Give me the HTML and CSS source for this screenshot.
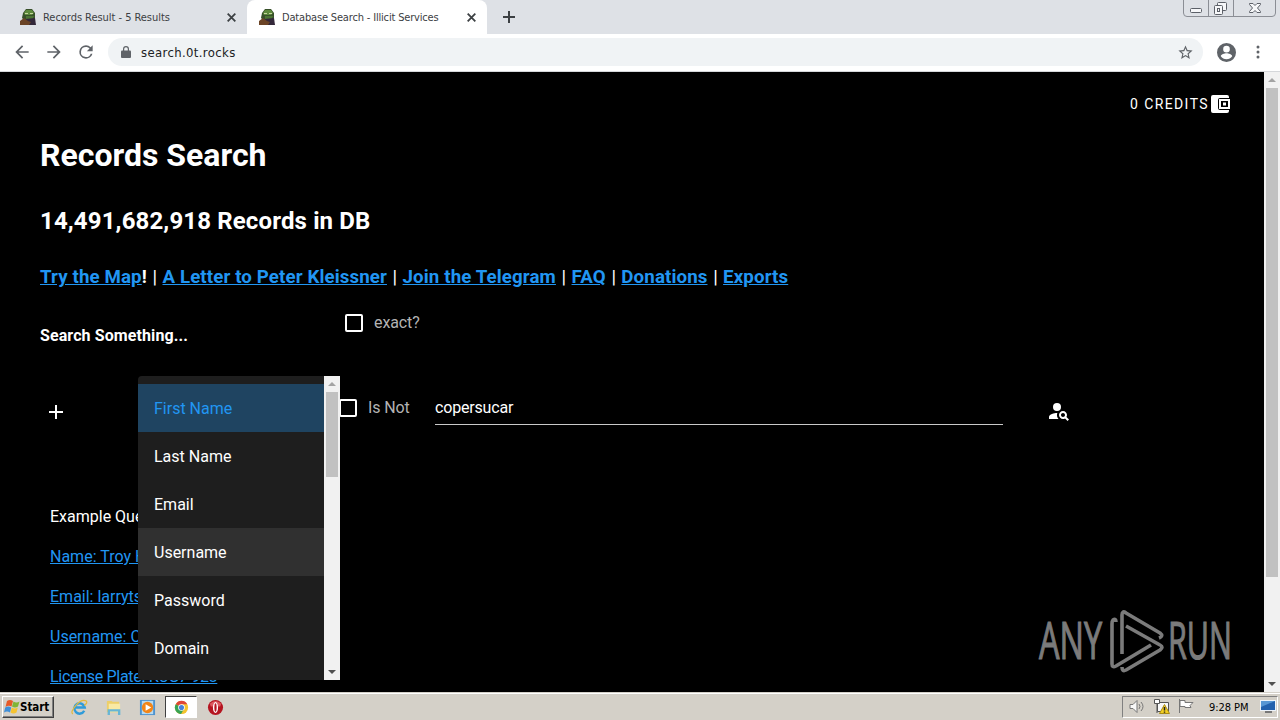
FILE: index.html
```
<!DOCTYPE html>
<html lang="en">
<head>
<meta charset="utf-8">
<title>Database Search - Illicit Services</title>
<link rel="stylesheet" href="styles.css">
</head>
<body>
<svg width="0" height="0" class="defs">
  <symbol id="frog" viewBox="0 0 16 16">
    <path fill="#38502a" d="M6 0h6l3 4v5l-2 3H5L2 9l1-5z"/>
    <path fill="#5d8a3c" d="M6 1h6l2 3-2 2H5L4 4z"/>
    <path fill="#4c7534" d="M6 7h8l-2 4H6z"/>
    <path fill="#c7d6a0" d="M5 4h3v1H5zM10 4h3v1h-3z"/>
    <path fill="#33283a" d="M5 10l10-1 1 7H4z"/>
    <path fill="#6b4426" d="M0 12l4-3 4 3 3 1-2 3H0z"/>
  </symbol>
  <symbol id="close" viewBox="0 0 8 8"><path d="M.6.6l6.8 6.8M7.4.6L.6 7.4" stroke="#3c4043" stroke-width="1.600"/></symbol>
</svg>
<div class="tabs">
  <div class="tab"><svg class="fav"><use href="#frog"/></svg><span class="t1">Records Result - 5 Results</span><svg class="x"><use href="#close"/></svg></div>
  <div class="tab active"><svg class="fav"><use href="#frog"/></svg><span class="t2">Database Search - Illicit Services</span><svg class="x"><use href="#close"/></svg></div>
  <svg class="newtab" viewBox="0 0 12 12"><path d="M6 0v12M0 6h12" stroke="#3c4043" stroke-width="2"/></svg>
  <svg class="winbtns" width="94" height="18" viewBox="0 0 94 18" fill="none">
    <path d="M.5 0v13q0 3.500 3.500 3.500h85q3.500 0 3.500-3.500V0M25.500 0v16M50.500 0v16" stroke="#8b8e95"/>
    <rect x="7.500" y="8.500" width="11" height="4" rx="1" fill="#f6f7f9" stroke="#5c6068"/>
    <rect x="34.500" y="2.500" width="9" height="8" rx="1" fill="#f6f7f9" stroke="#5c6068"/>
    <rect x="31.500" y="5.500" width="8" height="9" rx="1" fill="#f6f7f9" stroke="#5c6068"/>
    <rect x="34.500" y="8.500" width="2" height="3" stroke="#5c6068"/>
    <path d="M66.500 3.500h3.500l2 2 2-2h3.500v1l-3 3.500 3 3.500v1H74l-2-2-2 2h-3.500v-1l3-3.500-3-3.500z" fill="#f6f7f9" stroke="#5c6068"/>
  </svg>
</div>
<div class="toolbar">
  <svg class="nav" viewBox="0 0 24 24"><path d="M20 11H7.830l5.590-5.590L12 4l-8 8 8 8 1.410-1.410L7.830 13H20v-2z"/></svg>
  <svg class="nav" viewBox="0 0 24 24"><path d="M12 4l-1.410 1.410L16.170 11H4v2h12.170l-5.580 5.590L12 20l8-8z"/></svg>
  <svg class="nav" viewBox="0 0 24 24"><path d="M17.650 6.350A7.960 7.960 0 0 0 12 4a8 8 0 1 0 7.730 10h-2.080A6 6 0 1 1 12 6c1.660 0 3.140.69 4.220 1.780L13 11h7V4z"/></svg>
  <div class="omni">
    <svg class="lock" viewBox="0 0 10 12"><path d="M1 4.500h8q1 0 1 1V11q0 1-1 1H1q-1 0-1-1V5.500q0-1 1-1z" fill="#5f6368"/><path d="M2.600 5V3a2.400 2.400 0 0 1 4.800 0v2" fill="none" stroke="#5f6368" stroke-width="1.200"/></svg>
    <span class="url">search.0t.rocks</span>
    <svg class="star" viewBox="0 0 24 24"><path d="M22 9.240l-7.190-.62L12 2 9.190 8.630 2 9.240l5.460 4.730L5.820 21 12 17.270 18.180 21l-1.630-7.030zM12 15.400l-3.760 2.270 1-4.280-3.320-2.880 4.380-.38L12 6.100l1.710 4.040 4.380.38-3.320 2.880 1 4.280z"/></svg>
  </div>
  <svg class="user" viewBox="2 2 20 20"><path d="M12 2a10 10 0 1 0 0 20 10 10 0 0 0 0-20zm0 3a3.500 3.500 0 1 1 0 7 3.500 3.500 0 0 1 0-7zm0 14.200a7.200 7.200 0 0 1-6-3.220c.03-1.990 4-3.080 6-3.080s5.970 1.090 6 3.080a7.200 7.200 0 0 1-6 3.220z"/></svg>
  <svg class="dots" viewBox="0 0 4 14"><circle cx="2" cy="2" r="1.500"/><circle cx="2" cy="7" r="1.500"/><circle cx="2" cy="12" r="1.500"/></svg>
</div>
<div class="view">
  <main>
    <div class="credits"><span>0 CREDITS</span><svg class="wallet" viewBox="0 0 19 18"><path fill="#fff" d="M2 0h14q2 0 2 2v1H9Q7 3 7 5v8q0 2 2 2h9v1q0 2-2 2H2q-2 0-2-2V2q0-2 2-2z"/><path fill="none" stroke="#fff" stroke-width="2" d="M9 5h9v8H9z"/><path fill="#fff" d="M12 7.500h3v3h-3z"/></svg></div>
    <h1><span>Records Search</span></h1>
    <h2><span>14,491,682,918 Records in DB</span></h2>
    <h3><a>Try the Map</a>! <i>|</i> <a>A Letter to Peter Kleissner</a> <i>|</i> <a>Join the Telegram</a> <i>|</i> <a>FAQ</a> <i>|</i> <a>Donations</a> <i>|</i> <a>Exports</a></h3>
    <div class="top"><b>Search Something...</b><div class="check"><span class="box"></span><span class="lbl">exact?</span></div></div>
    <div class="query">
      <svg class="plus" viewBox="0 0 14 14"><path d="M7 0v14M0 7h14" stroke="#fff" stroke-width="2"/></svg>
      <div class="select"></div>
      <div class="check isnot"><span class="box"></span><span class="lbl">Is Not</span></div>
      <div class="input"><span>copersucar</span></div>
      <svg class="find" viewBox="0 0 24 24" fill="#fff"><circle cx="10" cy="8" r="4"/><path d="M10.350 14.010C7.620 13.910 2 15.270 2 18v2h9.540c-2.470-2.760-1.230-5.890-1.190-5.990zM19.430 18.020c.36-.59.57-1.280.57-2.020 0-2.210-1.790-4-4-4s-4 1.790-4 4 1.790 4 4 4c.74 0 1.430-.22 2.020-.57L20.590 22 22 20.590zM16 18c-1.100 0-2-.9-2-2s.9-2 2-2 2 .9 2 2-.9 2-2 2z"/></svg>
    </div>
    <div class="examples">
      <span>Example Queries</span>
      <a>Name: Troy Hunt</a>
      <a>Email: larrytsai</a>
      <a>Username: Crypto</a>
      <a class="plate">License Plate: KCG7 928</a>
    </div>
    <div class="menu">
      <ul><li class="sel">First Name</li><li>Last Name</li><li>Email</li><li class="hover">Username</li><li>Password</li><li>Domain</li></ul>
      <div class="sb"><i class="up"></i><div class="thumb"></div><i class="down"></i></div>
    </div>
    <svg class="mark" width="200" height="72" viewBox="0 0 200 72">
      <g fill="#7b7b7b" stroke="#7b7b7b" stroke-width="1.200" font-family="'Open Sans',sans-serif" font-size="51">
        <text x="3" y="56" textLength="63" lengthAdjust="spacingAndGlyphs">ANY</text>
        <text x="132" y="56" textLength="64" lengthAdjust="spacingAndGlyphs">RUN</text>
      </g>
      <g fill="none" stroke="#7b7b7b" stroke-width="3.600" stroke-linejoin="round">
        <path d="M80 19q0-4-3-2-1 1-1 4v40q0 4 4 2l35-21"/>
        <path d="M86 51V12q0-5 4-2l34 20q4 3-1 5"/>
        <path d="M90 23l34 19q4 2 0 5L90 67q-4 2-4-3"/>
      </g>
    </svg>
  </main>
  <div class="sb page"><i class="up"></i><div class="thumb"></div><i class="down"></i></div>
</div>
<div class="taskbar">
  <div class="start"><svg viewBox="0 0 16 16"><path fill="#e65a28" d="M3 2q3-2 6 0L7.500 7.500Q4.500 6 1.500 8z"/><path fill="#80b536" d="M9.500 2.500q3 2 6 0l-1.500 5q-3 2-6 0z"/><path fill="#3f8fd8" d="M1.200 8.500q3-2 6 0L6 13.500q-3-2-6 0z"/><path fill="#f5c331" d="M7.800 8.500q3 2 6 0l-1.300 5q-3 2-6 0z"/></svg><b>Start</b></div>
  <div class="apps">
    <div class="app"><svg viewBox="0 0 18 18"><path d="M14 12.500A5.500 5.500 0 1 1 14.500 9H5" fill="none" stroke="#2f9bd9" stroke-width="2.600"/><path d="M2 16Q-1 14 5 7t11-5q2 2-2 5" fill="none" stroke="#e3b93e" stroke-width="1.300"/></svg></div>
    <div class="app"><svg viewBox="0 0 18 18"><path fill="#edcf68" d="M2 2h5l1 1h7v11H2z"/><path fill="#f9e9a4" d="M4 5h12v9H4z"/><path fill="none" stroke="#67b5d5" stroke-width="2.500" d="M4 17v-5h11v5"/></svg></div>
    <div class="app"><svg viewBox="0 0 18 18"><path fill="#4d93ce" d="M1 1h16v16H1z"/><path fill="#b7daf0" d="M3 2h12v14H3z"/><circle cx="9" cy="9" r="6" fill="#f28518"/><path fill="#fff" d="M7 5.500l6 3.500-6 3.500z"/></svg></div>
    <div class="app on"><svg viewBox="0 0 18 18"><circle cx="9" cy="9" r="7" fill="#f3c32e"/><path fill="#df4637" d="M9 9L2.900 5.500A7 7 0 0 1 15.100 5.500L9 5.500z"/><path fill="#37a354" d="M9 9L2.900 5.500A7 7 0 0 0 8.500 16l3-5.200z"/><circle cx="9" cy="9" r="3.500" fill="#fff"/><circle cx="9" cy="9" r="2.700" fill="#4681d8"/></svg></div>
    <div class="app"><svg viewBox="0 0 18 18"><circle cx="9" cy="9" r="8" fill="#b51420"/><path fill="#dc5960" d="M3 5q6-6 12 0l-1 3H4z"/><ellipse cx="9" cy="9" rx="2.700" ry="5.800" fill="#fff"/><ellipse cx="9" cy="9" rx="1.200" ry="4.500" fill="#b51420"/></svg></div>
  </div>
  <div class="tray">
    <svg viewBox="0 0 18 18" fill="#f8f8f8" stroke="#777"><path d="M2 6.500h3l4-4v12l-4-4H2z"/><path d="M11 6q2 2.500 0 5M13 4q4 4.500 0 9" fill="none"/></svg>
    <svg viewBox="0 0 18 18"><path fill="#f8f8f8" stroke="#555" d="M4.500 4.500h11v9h-11z"/><path fill="#fff" stroke="#555" d="M1.500 1.500h5v4h-5zM4 6v9"/><path fill="#f4cf23" stroke="#a98b16" d="M11.500 6.500l5 9h-10z"/><path stroke="#222" stroke-width="1.500" d="M11.500 9v3.500m0 1v1.200"/></svg>
    <svg viewBox="0 0 18 18" fill="#fff" stroke="#777"><path d="M1.500 1v14M2 2.500h5v2h8l-3 3 1 2H7v-1H2z"/></svg>
    <span class="clock">9:28 PM</span>
    <svg class="desk" viewBox="0 0 18 18"><path fill="#edf3fa" d="M1 2h16v11H1z"/><path fill="#2260ad" d="M2 3h14v9H2z"/><path fill="#5796d4" d="M2 3h14L2 9z"/><path fill="#777" d="M6 13h7v2H6z"/></svg>
  </div>
</div>
</body>
</html>
```
FILE: styles.css
```
*{box-sizing:border-box}
body{margin:0;width:1280px;height:720px;overflow:hidden;display:flex;flex-direction:column;background:#000;font-family:Roboto,sans-serif;color:#fff}
svg{flex:none;display:block}
.defs{position:absolute}
.tabs{height:34px;flex:none;background:#dee1e6;display:flex;font:11px "DejaVu Sans Condensed",sans-serif;color:#3c4043;padding-left:8px}
.tab{width:239px;height:34px;display:flex;align-items:center;padding:0 11px 0 12px;white-space:nowrap}
.tab.active{background:#fff;border-radius:8px 8px 0 0;width:240px}
.fav{width:16px;height:16px;margin-right:7px}
.t1{letter-spacing:-.04px}
.t2{letter-spacing:-.17px}
.x{width:9px;height:9px;margin-left:auto}
.newtab{width:12px;height:12px;margin:11px 0 0 16px}
.winbtns{margin-left:auto;margin-right:3px}
.toolbar{height:38px;flex:none;background:#fff;border-bottom:1px solid #d5d7da;display:flex;align-items:center;padding:0 0 1px 12px}
.nav{width:20px;height:20px;margin-right:12px;fill:#5f6368}
.omni{width:1095px;height:28px;border-radius:14px;background:#f0f3f5;display:flex;align-items:center;padding:0 9px 0 13px}
.lock{width:10px;height:12px;margin-right:10px}
.url{font:13px "DejaVu Sans Condensed",sans-serif;letter-spacing:.36px;color:#202124}
.star{width:17px;height:17px;margin-left:auto;fill:#5f6368}
.user{width:19px;height:19px;margin-left:14px;fill:#5f6368}
.dots{width:4px;height:14px;margin-left:20px;fill:#5f6368}
.view{height:620px;flex:none;display:flex}
main{width:1264px;position:relative;padding-left:40px;overflow:hidden}
.credits{height:64px;display:flex;align-items:center;justify-content:flex-end;padding-right:34px;font-size:14px;letter-spacing:1.400px}
.credits span{margin-right:2px}
.wallet{width:19px;height:18px}
h1,h2,h3{margin:0;white-space:nowrap}
h1{font-size:32px;line-height:38px}
h2{font-size:24px;line-height:28px;margin-top:33px;letter-spacing:.14px}
h3{font-size:18.720px;line-height:24px;margin-top:30px;letter-spacing:.11px}
h3 i{font-style:normal;font-weight:400;margin:0 .5px 0 .9px}
a{color:#2196f3;text-decoration:underline}
.top{display:flex;height:68px;margin-top:13px}
.top b{width:294px;padding-top:24px;font-size:16px;line-height:20px;font-weight:700;letter-spacing:.1px}
.check{display:flex;align-items:center;height:18px;gap:11px;margin-left:11px;margin-top:12px;font-size:16px;letter-spacing:-.1px}
.box{width:18px;height:18px;border:2px solid #fff;border-radius:2px}
.lbl{color:#b3b3b3;padding-bottom:2px}
.query{display:flex;margin-top:6px;height:70px}
.plus{width:14px;height:14px;margin:29px 0 0 9px}
.select{width:186px;margin-left:75px}
.isnot{width:96px;margin:23px 0 0 15px}
.input{width:568px;height:49px;border-bottom:1px solid #c9c9c9;padding-top:22px;font-size:16px;line-height:20px;letter-spacing:-.18px}
.find{width:24px;height:24px;margin:23px 0 0 44px}
.examples{display:flex;flex-direction:column;align-items:flex-start;font-size:16px;line-height:40px;padding-left:10px;margin-top:51px;white-space:nowrap}
.plate{letter-spacing:-.3px}
.menu{position:absolute;left:138px;top:304px;width:202px;height:304px;display:flex;background:#1e1e1e;border-radius:4px 0 0 4px}
.menu ul{list-style:none;margin:0;padding:8px 0;width:186px;font-size:16px;line-height:46px}
.menu li{height:48px;padding:2px 0 0 16px}
.menu .sel{background:#1f4461;color:#2196f3}
.menu .hover{background:#303030}
.sb{width:16px;height:100%;background:#f1f1f1;display:flex;flex-direction:column;align-items:center}
.sb i{width:8px;height:4px;background:#a3a3a3;clip-path:polygon(50% 0,100% 100%,0 100%);margin:6px 0}
.sb .down{background:#505050;clip-path:polygon(0 0,100% 0,50% 100%);margin-top:auto}
.thumb{width:12px;height:85px;background:#c1c1c1}
.page .thumb{height:489px}
.mark{position:absolute;left:1036px;top:531px}
.taskbar{height:28px;flex:none;background:#d4d0c8;border-top:1px solid #d4d0c8;box-shadow:inset 0 1px #fff;display:flex;align-items:center;font:11px "DejaVu Sans Condensed",sans-serif;color:#000}
.start{width:52px;height:22px;margin:1px 0 0 2px;border:1px solid;border-color:#fff #404040 #404040 #fff;box-shadow:inset -1px -1px #808080;display:flex;align-items:center;font-size:11.500px;padding-left:1px}
.start svg{width:16px;height:16px}
.start b{letter-spacing:-.05px}
.apps{display:flex;margin-left:9px;padding-top:1px;gap:2px}
.app{width:32px;height:22px;display:flex;align-items:center;justify-content:center}
.app svg{width:17px;height:17px}
.on{background:#fff;border:1px solid;border-color:#404040 #fff #fff #404040}
.tray{width:156px;height:22px;margin:1px 2px 0 auto;border:1px solid;border-color:#808080 #fff #fff #808080;display:flex;align-items:center;padding-left:5px;gap:7px}
.tray svg{width:18px;height:18px}
.clock{margin-left:6px;white-space:nowrap;letter-spacing:-.05px}
.tray .desk{margin-left:auto}
```
